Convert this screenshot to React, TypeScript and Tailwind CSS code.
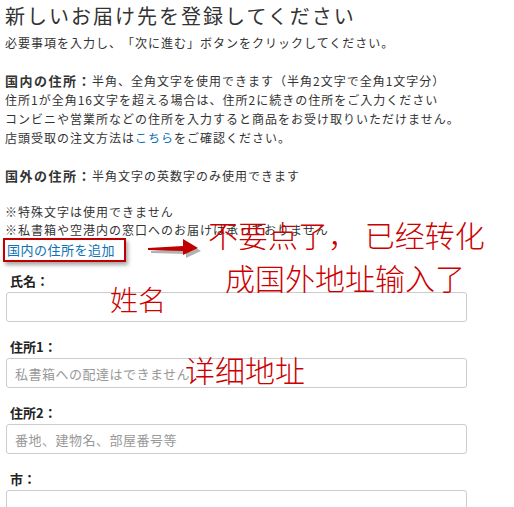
import React from 'react';

const jp = { fontFamily: '"Noto Sans CJK JP", "Noto Sans", sans-serif' };
const zh = { fontFamily: '"Noto Sans CJK SC", "Noto Sans", sans-serif' };

function Field({ label, placeholder }: { label: React.ReactNode; placeholder?: string }) {
  return (
    <div className="mb-[16px]">
      <div className="pl-[5px] text-[13px] leading-[18px] font-bold text-[#222]">{label}</div>
      <input
        type="text"
        placeholder={placeholder}
        className="mt-[2px] ml-[1px] h-[30px] w-[461px] rounded-[3px] border border-[#cccccc] bg-white pl-[8px] text-[13px] tracking-[0.5px] text-[#333] placeholder:text-[#999]"
        style={jp}
      />
    </div>
  );
}

export default function App() {
  return (
    <div
      className="relative h-[507px] w-[514px] overflow-hidden bg-white pl-[5px] text-[#333] [text-spacing-trim:space-all]"
      style={jp}
    >
      {/* Header */}
      <h1 className="mt-[2px] text-[20px] leading-[28px] tracking-[2px] font-normal text-[#333]">
        新しいお届け先を登録してください
      </h1>
      <p className="mt-[3px] text-[12px] leading-[19px] tracking-[1px]">
        必要事項を入力し、「次に進む」ボタンをクリックしてください。
      </p>

      {/* Notes */}
      <div className="mt-[19px] text-[12px] leading-[19px] tracking-[1px]">
        <div>
          <span className="font-bold text-[13px] tracking-[1.5px]">国内の住所：</span>
          半角、全角文字を使用できます（半角2文字で全角1文字分）
        </div>
        <div>住所1が全角16文字を超える場合は、住所2に続きの住所をご入力ください</div>
        <div>コンビニや営業所などの住所を入力すると商品をお受け取りいただけません。</div>
        <div>
          店頭受取の注文方法は<span className="text-[#0b72b5]">こちら</span>をご確認ください。
        </div>
        <div className="mt-[19px]">
          <span className="font-bold text-[13px] tracking-[1.5px]">国外の住所：</span>
          半角文字の英数字のみ使用できます
        </div>
        <div className="mt-[18px] leading-[18px]">※特殊文字は使用できません</div>
        <div className="leading-[17px]">※私書箱や空港内の窓口へのお届けは承っておりません</div>
      </div>

      {/* Link with annotation box */}
      <div className="-ml-[2px] w-[123px] border-2 border-[#c00000] pl-[2px] text-[13px] leading-[20px] tracking-[0.5px] text-[#0b72b5] shadow-[2px_3px_4px_rgba(0,0,0,0.35)]">
        国内の住所を追加
      </div>

      {/* Form */}
      <div className="mt-[10px]">
        <Field label="氏名：" />
        <Field label="住所1：" placeholder="私書箱への配達はできません" />
        <Field label="住所2：" placeholder="番地、建物名、部屋番号等" />
        <Field label="市：" />
      </div>

      {/* Annotations */}
      <svg className="absolute left-[144px] top-[234px]" width="62" height="28" viewBox="0 0 62 28">
        <g transform="translate(3 3)" opacity="0.3">
          <path d="M4 14 L39 12 L39 5 L54 14 L39 21 L39 17 L4 16 Z" fill="#000" />
        </g>
        <path d="M4 14 L39 12 L39 5 L54 14 L39 21 L39 17 L4 16 Z" fill="#c00000" />
      </svg>
      <div className="absolute left-[208px] top-[216px] text-[30px] leading-[36px] font-light text-[#cc0000]" style={zh}>
        不要点了，&nbsp;已经转化
      </div>
      <div className="absolute left-[225px] top-[259px] text-[30px] leading-[36px] font-light text-[#cc0000]" style={zh}>
        成国外地址输入了
      </div>
      <div className="absolute left-[110px] top-[282px] text-[28px] leading-[34px] font-light text-[#cc0000]" style={zh}>
        姓名
      </div>
      <div className="absolute left-[185px] top-[351px] text-[30px] leading-[36px] font-light text-[#cc0000]" style={zh}>
        详细地址
      </div>
    </div>
  );
}
